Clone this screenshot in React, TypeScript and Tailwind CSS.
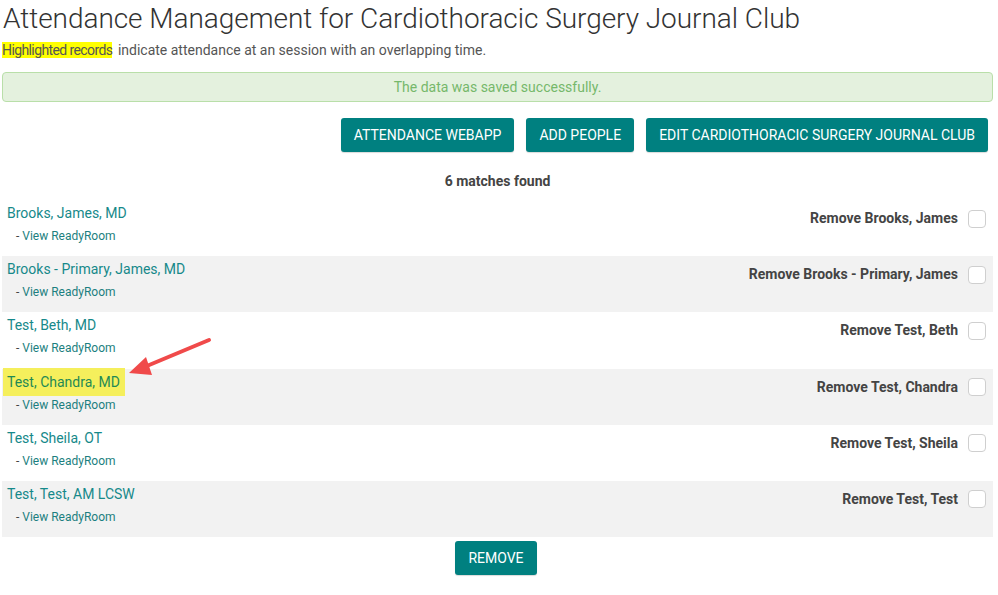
import React from 'react';

interface Person {
  name: string;
  short: string;
  overlap?: boolean;
}

const people: Person[] = [
  { name: 'Brooks, James, MD', short: 'Brooks, James' },
  { name: 'Brooks - Primary, James, MD', short: 'Brooks - Primary, James' },
  { name: 'Test, Beth, MD', short: 'Test, Beth' },
  { name: 'Test, Chandra, MD', short: 'Test, Chandra', overlap: true },
  { name: 'Test, Sheila, OT', short: 'Test, Sheila' },
  { name: 'Test, Test, AM LCSW', short: 'Test, Test' },
];

const btn =
  'h-[34px] px-[13px] rounded-[3px] bg-[#008080] text-white text-[14px] font-normal uppercase shadow-[0_1px_1px_rgba(0,0,0,0.15)]';

export default function App() {
  return (
    <div
      className="relative w-[998px] h-[595px] bg-white text-[#555] overflow-hidden"
      style={{ fontFamily: 'Roboto, "Liberation Sans", sans-serif' }}
    >
      <div className="pl-[2px] w-[993px]">
        <h1 className="pl-px pt-[1px] text-[28px] leading-[36px] font-light text-[#333] tracking-[-0.05px]">
          Attendance Management for Cardiothoracic Surgery Journal Club
        </h1>
        <p className="mt-[3px] text-[14px] leading-[20px] text-[#555]">
          <span className="bg-[#ffff00] tracking-[-0.6px] mr-[2px]">Highlighted records</span> indicate attendance at an session with an overlapping time.
        </p>

        {/* saved alert */}
        <div className="mt-[12px] h-[30px] flex items-center justify-center rounded-[4px] border border-[#b9dfa9] bg-[#e4f1de] text-[14px] text-[#76b86b]">
          The data was saved successfully.
        </div>

        <div className="mt-[16px] flex justify-end gap-[12px] pr-[5px]">
          <button className={btn}>Attendance WebApp</button>
          <button className={btn}>Add People</button>
          <button className={btn}>Edit Cardiothoracic Surgery Journal Club</button>
        </div>

        <div className="mt-[19px] text-center text-[14px] font-bold text-[#444] leading-[20px]">6 matches found</div>

        <div className="mt-[9px]">
          {people.map((p, i) => (
            <div
              key={p.name}
              className={`h-[56.2px] flex items-start justify-between ${i % 2 === 1 ? 'bg-[#f2f2f2]' : 'bg-white'}`}
            >
              <div className="flex flex-col items-start">
                <span
                  className={`text-[14px] leading-[20px] px-[5px] ${
                    p.overlap ? 'bg-[#f5ef5c] text-[#1f8a55] py-[4px] mt-[-1px] ml-[1px] pl-[4px]' : 'text-[#16898a] mt-[3px] ml-0'
                  }`}
                >
                  {p.name}
                </span>
                <span className={`text-[12px] leading-[16px] pl-[14px] text-[#1c7f80] ${p.overlap ? 'mt-px' : 'mt-[5px]'}`}>
                  <span className="text-[#444]">- </span>View ReadyRoom
                </span>
              </div>
              <div className="flex items-center gap-[10px] pr-[7px] pt-[8px]">
                <span className="text-[14px] font-bold text-[#444]">Remove {p.short}</span>
                <span className="w-[18px] h-[18px] rounded-[4px] border border-[#cfcfcf] bg-white" />
              </div>
            </div>
          ))}
        </div>

        <div className="mt-[4px] flex justify-center">
          <button className={`${btn} ml-[-3px]`}>Remove</button>
        </div>
      </div>

      {/* red annotation arrow */}
      <svg className="absolute left-[120px] top-[330px]" width="100" height="50" viewBox="0 0 100 50">
        <line x1="89" y1="10" x2="22" y2="38" stroke="#f04a4a" strokeWidth="4" strokeLinecap="round" />
        <polygon points="9,43 26,27 32,45" fill="#f04a4a" />
      </svg>
    </div>
  );
}
